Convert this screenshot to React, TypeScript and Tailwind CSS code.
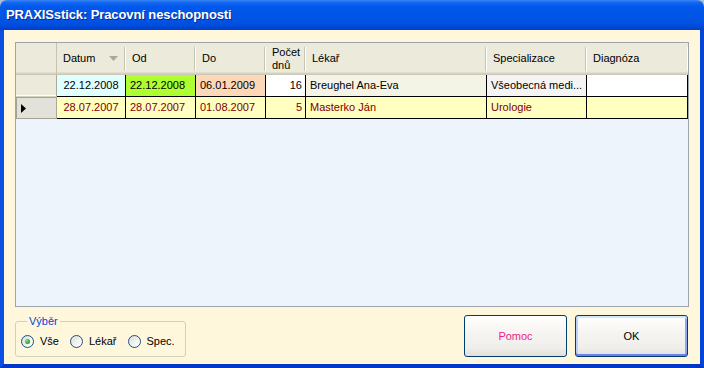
import React from "react";

const cols = [
  { key: "rh", w: 41, label: "" },
  { key: "datum", w: 69, label: "Datum" },
  { key: "od", w: 70, label: "Od" },
  { key: "do", w: 70, label: "Do" },
  { key: "pocet", w: 40, label: "Počet dnů" },
  { key: "lekar", w: 181, label: "Lékař" },
  { key: "spec", w: 100, label: "Specializace" },
  { key: "diag", w: 101, label: "Diagnóza" },
];

function Sep() {
  return <div className="h-[24px] w-[2px] shrink-0 border-l border-[#C7C5B2] border-r border-r-white self-center" />;
}

function Radio({ checked, label }: { checked?: boolean; label: string }) {
  return (
    <div className="flex items-center gap-[6px]">
      <div className="w-[13px] h-[13px] rounded-full border border-[#1C5180] bg-[linear-gradient(135deg,#DCDCD7_0%,#F4F4F0_60%,#FFFFFF_100%)] flex items-center justify-center">
        {checked && (
          <div className="w-[5px] h-[5px] rounded-full bg-[radial-gradient(circle_at_35%_35%,#7BE57A_0%,#2DAA2D_60%,#1A8A1A_100%)]" />
        )}
      </div>
      <span>{label}</span>
    </div>
  );
}

export default function App() {
  const font = { fontFamily: '"Liberation Sans", Arial, sans-serif' };
  return (
    <div className="w-[704px] h-[368px] bg-[#AFBCD8]" style={font}>
      <div className="w-[704px] h-[368px] flex flex-col">
        {/* Title bar */}
        <div className="h-[30px] shrink-0 rounded-t-[7px] flex items-center pl-[6px] bg-[linear-gradient(180deg,#3A86F2_0%,#1468F0_8%,#0058EC_22%,#0055E5_55%,#0051E0_80%,#0046D2_93%,#003DC4_100%)]">
          <span className="text-white font-bold text-[13px] tracking-[-0.1px] [text-shadow:1px_1px_0_#0A2A90] leading-none pb-[1px]">
            PRAXISstick: Pracovní neschopnosti
          </span>
        </div>
        {/* Body */}
        <div className="flex-1 flex flex-col bg-[#FEF7DC] border-l-4 border-r-4 border-b-4 border-l-[#0A50E2] border-r-[#0343D6] border-b-[#0236C6] px-[11px] pt-[12px] text-[11px] text-black">
          {/* Grid */}
          <div className="h-[265px] border border-[#9CA3AB] bg-[#EEF4FC] flex flex-col">
            {/* Header */}
            <div className="h-[32px] flex bg-[#EBEADB] shadow-[inset_0_-1px_0_#CBC7B8,inset_0_-2px_0_#D6D2C2,inset_0_-3px_0_#E2DECD]">
              {cols.map((c) => (
                <div key={c.key} style={{ width: c.w }} className="h-full flex items-stretch shrink-0">
                  <div className="flex-1 flex items-center pl-[6px] pb-[1px] relative">
                    {c.key === "pocet" ? (
                      <span className="leading-[13px]">
                        Počet
                        <br />
                        dnů
                      </span>
                    ) : (
                      <span>{c.label}</span>
                    )}
                    {c.key === "datum" && (
                      <svg className="absolute right-[6px] top-[13px]" width="9" height="5" viewBox="0 0 9 5">
                        <path d="M0 0 H9 L4.5 5 Z" fill="#ACA899" />
                      </svg>
                    )}
                  </div>
                  {c.key === "rh" ? (
                    <div className="w-px bg-[#C7C5B2] shrink-0" />
                  ) : c.key === "diag" ? (
                    <div className="w-px bg-white shrink-0 my-[4px]" />
                  ) : (
                    <Sep />
                  )}
                </div>
              ))}
            </div>
            {/* Row 1 */}
            <div className="h-[22px] flex">
              <div className="w-[41px] shrink-0 bg-[#EBEADB] border-r border-r-[#ACA899] border-b border-b-[#D6D2C2] shadow-[inset_0_-1px_0_#FFFFFF]" />
              <div className="w-[69px] shrink-0 bg-[#E0FFFF] border-r border-b border-black flex items-center justify-center">22.12.2008</div>
              <div className="w-[70px] shrink-0 bg-[#ADFF2F] border-r border-b border-black flex items-center pl-[4px]">22.12.2008</div>
              <div className="w-[70px] shrink-0 bg-[#FDD8B8] border-r border-b border-black flex items-center pl-[4px]">06.01.2009</div>
              <div className="w-[40px] shrink-0 bg-white border-r border-b border-black flex items-center justify-end pr-[3px]">16</div>
              <div className="w-[181px] shrink-0 bg-[#F4F4E6] border-r border-b border-black flex items-center pl-[4px]">Breughel Ana-Eva</div>
              <div className="w-[100px] shrink-0 bg-[#F4F4F4] border-r border-b border-black flex items-center pl-[4px] whitespace-nowrap overflow-hidden">Všeobecná medi...</div>
              <div className="w-[101px] shrink-0 bg-white border-r border-b border-black" />
            </div>
            {/* Row 2 */}
            <div className="h-[22px] flex text-[#800000]">
              <div className="w-[41px] shrink-0 bg-[#E2E1DA] border border-[#A5A397] border-r-[#ACA899] flex items-center pl-[4px]">
                <svg width="5" height="9" viewBox="0 0 5 9">
                  <path d="M0 0 L5 4.5 L0 9 Z" fill="#000" />
                </svg>
              </div>
              <div className="w-[69px] shrink-0 bg-[#FFFFC0] border-r border-b border-black flex items-center justify-center">28.07.2007</div>
              <div className="w-[70px] shrink-0 bg-[#FFFFC0] border-r border-b border-black flex items-center pl-[4px]">28.07.2007</div>
              <div className="w-[70px] shrink-0 bg-[#FFFFC0] border-r border-b border-black flex items-center pl-[4px]">01.08.2007</div>
              <div className="w-[40px] shrink-0 bg-[#FFFFC0] border-r border-b border-black flex items-center justify-end pr-[3px]">5</div>
              <div className="w-[181px] shrink-0 bg-[#FFFFC0] border-r border-b border-black flex items-center pl-[4px]">Masterko Ján</div>
              <div className="w-[100px] shrink-0 bg-[#FFFFC0] border-r border-b border-black flex items-center pl-[4px]">Urologie</div>
              <div className="w-[101px] shrink-0 bg-[#FFFFC0] border-r border-b border-black" />
            </div>
          </div>
          {/* Bottom */}
          <div className="flex items-start mt-[8px]">
            <fieldset className="w-[171px] h-[42px] border border-[#D0D0BF] rounded-[3px] pl-[5px] pr-[4px]">
              <legend className="ml-[6px] px-[2px] text-[#0046D5] leading-[13px]">Výběr</legend>
              <div className="h-[27px] flex items-center gap-[11px]">
                <Radio checked label="Vše" />
                <Radio label="Lékař" />
                <Radio label="Spec." />
              </div>
            </fieldset>
            <div className="flex-1" />
            <button className="w-[103px] h-[42px] rounded-[3px] border border-[#003C74] bg-[linear-gradient(180deg,#FFFFFF_0%,#F6F5F1_40%,#EFEEEA_80%,#E2DFD6_100%)] text-[#EE1C8C] text-[11px]">
              Pomoc
            </button>
            <button className="ml-[8px] mr-[1px] w-[113px] h-[42px] rounded-[3px] border border-[#003C74] bg-[linear-gradient(180deg,#FFFFFF_0%,#F6F5F1_40%,#EFEEEA_80%,#E2DFD6_100%)] shadow-[inset_0_2px_0_#CEE7FF,inset_0_-2px_0_#6982EE,inset_2px_0_0_#B9D1FA,inset_-2px_0_0_#8DA8F3] text-black text-[11px]">
              OK
            </button>
          </div>
        </div>
      </div>
    </div>
  );
}
